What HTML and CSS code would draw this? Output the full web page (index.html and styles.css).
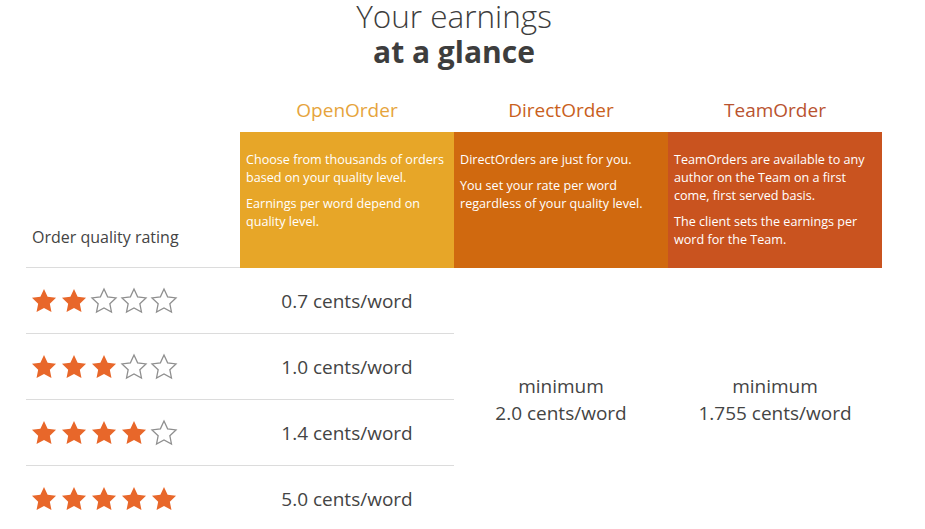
FILE: index.html
```html
<!DOCTYPE html>
<html>
<head>
<meta charset="utf-8">
<link rel="stylesheet" href="styles.css">
</head>
<body>
<svg width="0" height="0" class="defs">
  <defs>
    <symbol id="star" viewBox="0 0 24 24">
      <path d="M12 1.8l3.1 6.6 7.2.9-5.3 5 1.4 7.1L12 17.9l-6.4 3.5 1.4-7.1-5.3-5 7.2-.9z"/>
    </symbol>
  </defs>
</svg>
<div class="page">
  <h1 class="title"><span class="light">Your earnings</span><span class="bold">at a glance</span></h1>
  <div class="table">
    <div class="head blank"></div>
    <div class="head name open">OpenOrder</div>
    <div class="head name direct">DirectOrder</div>
    <div class="head name team">TeamOrder</div>

    <div class="label">Order quality rating</div>
    <div class="box box-open">
      <p>Choose from thousands of orders based on your quality level.</p>
      <p>Earnings per word depend on quality level.</p>
    </div>
    <div class="box box-direct">
      <p>DirectOrders are just for you.</p>
      <p>You set your rate per word regardless of your quality level.</p>
    </div>
    <div class="box box-team">
      <p>TeamOrders are available to any author on the Team on a first come, first served basis.</p>
      <p>The client sets the earnings per word for the Team.</p>
    </div>

    <div class="stars r1"><svg class="s f"><use href="#star"/></svg><svg class="s f"><use href="#star"/></svg><svg class="s e"><use href="#star"/></svg><svg class="s e"><use href="#star"/></svg><svg class="s e"><use href="#star"/></svg></div>
    <div class="rate r1">0.7 cents/word</div>

    <div class="stars r2"><svg class="s f"><use href="#star"/></svg><svg class="s f"><use href="#star"/></svg><svg class="s f"><use href="#star"/></svg><svg class="s e"><use href="#star"/></svg><svg class="s e"><use href="#star"/></svg></div>
    <div class="rate r2">1.0 cents/word</div>

    <div class="stars r3"><svg class="s f"><use href="#star"/></svg><svg class="s f"><use href="#star"/></svg><svg class="s f"><use href="#star"/></svg><svg class="s f"><use href="#star"/></svg><svg class="s e"><use href="#star"/></svg></div>
    <div class="rate r3">1.4 cents/word</div>

    <div class="stars r4 last"><svg class="s f"><use href="#star"/></svg><svg class="s f"><use href="#star"/></svg><svg class="s f"><use href="#star"/></svg><svg class="s f"><use href="#star"/></svg><svg class="s f"><use href="#star"/></svg></div>
    <div class="rate r4 last">5.0 cents/word</div>

    <div class="min min-direct"><span>minimum</span><span>2.0 cents/word</span></div>
    <div class="min min-team"><span>minimum</span><span>1.755 cents/word</span></div>
  </div>
</div>
</body>
</html>
```
FILE: styles.css
```css
html, body {
  margin: 0;
  padding: 0;
  background: #fff;
}
body {
  font-family: "Open Sans", "Liberation Sans", sans-serif;
  color: #444;
}
.defs {
  position: absolute;
  width: 0;
  height: 0;
}
.page {
  width: 856px;
  margin-left: 26px;
}
.title {
  margin: 0;
  text-align: center;
  color: #3d3d3d;
  display: flex;
  flex-direction: column;
  align-items: center;
  font-weight: normal;
}
.title .light {
  font-size: 31.5px;
  line-height: 31px;
  font-weight: 300;
}
.title .bold {
  font-size: 30px;
  line-height: 36px;
  font-weight: 700;
  margin-top: 3px;
}
.table {
  margin-top: 21px;
  display: grid;
  grid-template-columns: 214px 214px 214px 214px;
  grid-template-rows: 41px 136px 66px 66px 66px 66px;
}
.head {
  display: flex;
  align-items: center;
  justify-content: center;
  font-size: 19px;
  padding-bottom: 3px;
}
.name.open { color: #e6a43c; }
.name.direct { color: #c9601c; }
.name.team { color: #b9532f; }
.label {
  display: flex;
  align-items: flex-end;
  padding: 0 0 19px 6px;
  font-size: 16px;
  color: #444;
  border-bottom: 1px solid #dcdcdc;
}
.box {
  color: #fff;
  font-size: 12.6px;
  line-height: 18px;
  padding: 19px 6px 0 6px;
}
.box p {
  margin: 0 0 8px 0;
}
.box-open { background: #e7a628; }
.box-direct { background: #d0690f; }
.box-team { background: #c9531f; }
.stars {
  grid-column: 1;
  display: flex;
  align-items: center;
  gap: 2px;
  padding-left: 4px;
  border-bottom: 1px solid #dcdcdc;
}
.rate {
  grid-column: 2;
  display: flex;
  align-items: center;
  justify-content: center;
  font-size: 19px;
  color: #444;
  border-bottom: 1px solid #dcdcdc;
}
.last { border-bottom: none; }
.r1 { grid-row: 3; }
.r2 { grid-row: 4; }
.r3 { grid-row: 5; }
.r4 { grid-row: 6; }
.s {
  width: 28px;
  height: 28px;
}
.s.f {
  fill: #e8672a;
}
.s.e {
  fill: none;
  stroke: #8f8f8f;
  stroke-width: 1.1;
}
.min {
  grid-row: 3 / 7;
  display: flex;
  flex-direction: column;
  align-items: center;
  justify-content: center;
  font-size: 19px;
  line-height: 27px;
  color: #444;
}
.min-direct { grid-column: 3; }
.min-team { grid-column: 4; }
```
